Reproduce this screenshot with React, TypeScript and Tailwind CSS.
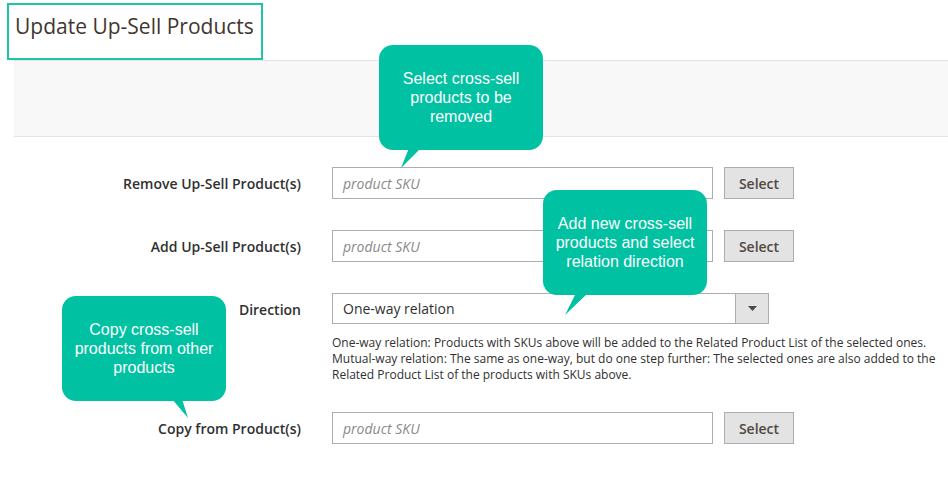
import React from "react";

const TEAL = "#00c2a2";

function Bubble({
  left,
  top,
  lines,
  tail,
}: {
  left: number;
  top: number;
  lines: string[];
  tail: { x1: number; x2: number; tipX: number; tipY: number };
}) {
  return (
    <div className="absolute" style={{ left, top, width: 164, height: 105 }}>
      <div
        className="w-full h-full rounded-[14px] flex flex-col items-center justify-center text-[#fdfdfd] text-[16px] leading-[19px] text-center"
        style={{ background: TEAL, fontFamily: "Arial, 'Liberation Sans', sans-serif" }}
      >
        {lines.map((l, i) => (
          <div key={i} className="whitespace-nowrap">{l}</div>
        ))}
      </div>
      <svg className="absolute left-0 top-0 overflow-visible" width="164" height="105">
        <polygon
          points={`${tail.x1},103 ${tail.x2},103 ${tail.tipX},${tail.tipY}`}
          fill={TEAL}
        />
      </svg>
    </div>
  );
}

function SkuRow({ label }: { label: string }) {
  return (
    <div className="flex items-center h-[32px]">
      <div className="w-[301px] text-right text-[14px] font-semibold text-[#303030]">{label}</div>
      <div className="ml-[31px] flex items-center">
        <div className="w-[381px] h-[32px] border border-[#adadad] bg-white flex items-center px-[10px] text-[14px] italic text-[#8a8a8a]">
          product SKU
        </div>
        <div className="ml-[11px] w-[70px] h-[32px] border border-[#adadad] bg-[#e3e3e3] flex items-center justify-center text-[14px] font-semibold text-[#514943]">
          Select
        </div>
      </div>
    </div>
  );
}

export default function App() {
  return (
    <div
      className="relative w-[948px] h-[487px] bg-white overflow-hidden"
      style={{ fontFamily: "'Open Sans', sans-serif" }}
    >
      <div className="pl-[7px] pt-[3px]">
        <div className="w-[256px] h-[57px] border-2 border-[#1ec6a6] flex items-center pl-[6px] pb-[10px]">
          <span className="text-[21px] text-[#41362f]">Update Up-Sell Products</span>
        </div>
      </div>
      <div className="ml-[14px] h-[77px] bg-[#f8f8f8] border-t border-b border-[#e3e3e3]" />

      <div className="pt-[30px] flex flex-col">
        <SkuRow label="Remove Up-Sell Product(s)" />
        <div className="h-[31px]" />
        <SkuRow label="Add Up-Sell Product(s)" />
        <div className="h-[31px]" />
        <div className="flex items-center h-[31px]">
          <div className="w-[301px] text-right text-[14px] font-semibold text-[#303030] pt-[2px]">Direction</div>
          <div className="ml-[31px] w-[437px] h-[31px] border border-[#adadad] bg-white flex items-center">
            <div className="flex-1 px-[10px] text-[14px] text-[#303030]">One-way relation</div>
            <div className="w-[33px] h-full border-l border-[#adadad] bg-[#e3e3e3] flex items-center justify-center">
              <svg width="9" height="5" viewBox="0 0 9 5">
                <polygon points="0,0 9,0 4.5,5" fill="#514943" />
              </svg>
            </div>
          </div>
        </div>
        <div className="ml-[332px] mt-[11px] text-[12px] leading-[16px] text-[#303030]">
          <div>One-way relation: Products with SKUs above will be added to the Related Product List of the selected ones.</div>
          <div>Mutual-way relation: The same as one-way, but do one step further: The selected ones are also added to the</div>
          <div>Related Product List of the products with SKUs above.</div>
        </div>
        <div className="h-[29px]" />
        <SkuRow label="Copy from Product(s)" />
      </div>

      <Bubble
        left={379}
        top={45}
        lines={["Select cross-sell", "products to be", "removed"]}
        tail={{ x1: 30, x2: 42, tipX: 22, tipY: 123 }}
      />
      <Bubble
        left={543}
        top={190}
        lines={["Add new cross-sell", "products and select", "relation direction"]}
        tail={{ x1: 33, x2: 45, tipX: 22, tipY: 125 }}
      />
      <Bubble
        left={62}
        top={296}
        lines={["Copy cross-sell", "products from other", "products"]}
        tail={{ x1: 110, x2: 120, tipX: 126, tipY: 122 }}
      />
    </div>
  );
}
